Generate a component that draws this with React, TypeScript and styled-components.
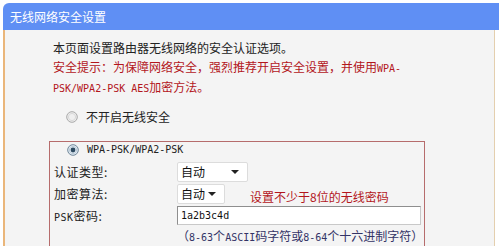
import React from "react"
import styled, { createGlobalStyle } from "styled-components"

const GlobalStyle = createGlobalStyle`
  html, body {
    margin: 0;
    padding: 0;
    background: #ffffff;
  }
  body {
    font-family: "Noto Sans CJK SC", "Noto Sans", sans-serif;
    font-size: 12px;
  }
`

const MONO = `"DejaVu Sans Mono", "Liberation Mono", "Noto Sans CJK SC", monospace`

function Radio({ checked }: { checked?: boolean }): JSX.Element {
  return (
    <RadioIcon width="12" height="12" viewBox="0 0 12 12">
      <circle cx="6" cy="6" r="5.3" fill={checked ? "#e6eef5" : "#efefef"} stroke={checked ? "#6e8598" : "#a8a8a8"} strokeWidth="1" />
      <circle cx="6" cy="6" r="3.6" fill="none" stroke={checked ? "#b9cad8" : "#d8d8d8"} strokeWidth="1" />
      {checked && <circle cx="6" cy="6" r="2.4" fill="#2d4a60" />}
    </RadioIcon>
  )
}

function Select({ value, width }: { value: string; width: number }): JSX.Element {
  return (
    <SelectBox $width={width}>
      <span>{value}</span>
      <Caret />
    </SelectBox>
  )
}

function App(): JSX.Element {
  return (
    <Frame>
      <GlobalStyle />
      <Header>无线网络安全设置</Header>
      <Panel>
        <Intro>
          <p>本页面设置路由器无线网络的安全认证选项。</p>
          <Warning>
            安全提示：为保障网络安全，强烈推荐开启安全设置，并使用<Latin>WPA-</Latin>
            <br />
            <Latin>PSK/WPA2-PSK AES</Latin>加密方法。
          </Warning>
        </Intro>
        <OptionRow>
          <Radio />
          <span>不开启无线安全</span>
        </OptionRow>
        <SecurityBox>
          <BoxHeader>
            <Radio checked />
            <Latin>WPA-PSK/WPA2-PSK</Latin>
          </BoxHeader>
          <FormGrid>
            <Label>认证类型:</Label>
            <Field>
              <Select value="自动" width={71} />
            </Field>
            <Label>加密算法:</Label>
            <Field>
              <Select value="自动" width={48} />
              <Hint>设置不少于8位的无线密码</Hint>
            </Field>
            <Label>
              <Latin>PSK</Latin>密码:
            </Label>
            <Field>
              <TextInput>1a2b3c4d</TextInput>
            </Field>
            <Label />
            <Note>
              （<Latin>8-63</Latin>个<Latin>ASCII</Latin>码字符或<Latin>8-64</Latin>个十六进制字符）
            </Note>
          </FormGrid>
        </SecurityBox>
      </Panel>
    </Frame>
  )
}

const Frame = styled.div`
  width: 499px;
  height: 246px;
  overflow: hidden;
  padding: 3px 0 0 3px;
  box-sizing: border-box;
  display: flex;
  flex-direction: column;
`

const Header = styled.div`
  height: 27px;
  flex-shrink: 0;
  background: #5f8ff4;
  border-top-left-radius: 6px;
  color: #ffffff;
  font-size: 12px;
  line-height: 27px;
  padding-left: 7px;
`

const Panel = styled.div`
  flex: 1;
  margin-right: 4px;
  background: #f4f4f4;
  border-left: 2px solid #eab67a;
  border-right: 1px solid #e4cfae;
  padding: 9px 0 0 44px;
`

const Intro = styled.div`
  padding-left: 4px;
  color: #222222;
  line-height: 18.5px;
  p {
    margin: 0;
  }
`

const Warning = styled.div`
  color: #b3161c;
`

const Latin = styled.span`
  font-family: ${MONO};
  font-size: 10px;
`

const OptionRow = styled.div`
  display: flex;
  align-items: center;
  gap: 8px;
  height: 20px;
  margin-top: 8px;
  padding-left: 17px;
  color: #222222;
`

const RadioIcon = styled.svg`
  flex-shrink: 0;
`

const SecurityBox = styled.div`
  margin-top: 14px;
  width: 376px;
  border: 1px solid #b66c6c;
  padding: 0 0 0 4px;
  box-sizing: border-box;
  color: #222222;
`

const BoxHeader = styled.div`
  display: flex;
  align-items: center;
  gap: 8px;
  height: 16px;
  padding-left: 13px;
`

const FormGrid = styled.div`
  display: grid;
  grid-template-columns: 123px 1fr;
  grid-auto-rows: 22px;
  align-items: center;
  margin-top: 3px;
`

const Label = styled.div`
  font-size: 12px;
  letter-spacing: 0.5px;
`

const Field = styled.div`
  display: flex;
  align-items: center;
  position: relative;
`

const SelectBox = styled.div<{ $width: number }>`
  width: ${(p) => p.$width}px;
  height: 20px;
  box-sizing: border-box;
  background: #ffffff;
  border: 1px solid #dcdcdc;
  border-radius: 2px;
  display: flex;
  align-items: center;
  justify-content: space-between;
  padding: 0 8px 0 3px;
  font-size: 12px;
  color: #111111;
`

const Caret = styled.span`
  width: 0;
  height: 0;
  border-left: 4px solid transparent;
  border-right: 4px solid transparent;
  border-top: 4px solid #222222;
`

const Hint = styled.span`
  position: absolute;
  left: 73px;
  top: 4px;
  color: #b3161c;
  font-size: 12px;
  white-space: nowrap;
`

const TextInput = styled.div`
  width: 244px;
  height: 19px;
  box-sizing: border-box;
  background: #ffffff;
  border: 1px solid #8e8e8e;
  border-right-color: #c9c9c9;
  border-bottom-color: #c9c9c9;
  padding-left: 3px;
  display: flex;
  align-items: center;
  font-family: ${MONO};
  font-size: 10px;
  color: #111111;
`

const Note = styled.div`
  color: #333366;
  white-space: nowrap;
  line-height: 14px;
  align-self: start;
  padding-top: 2px;
`

export default App
